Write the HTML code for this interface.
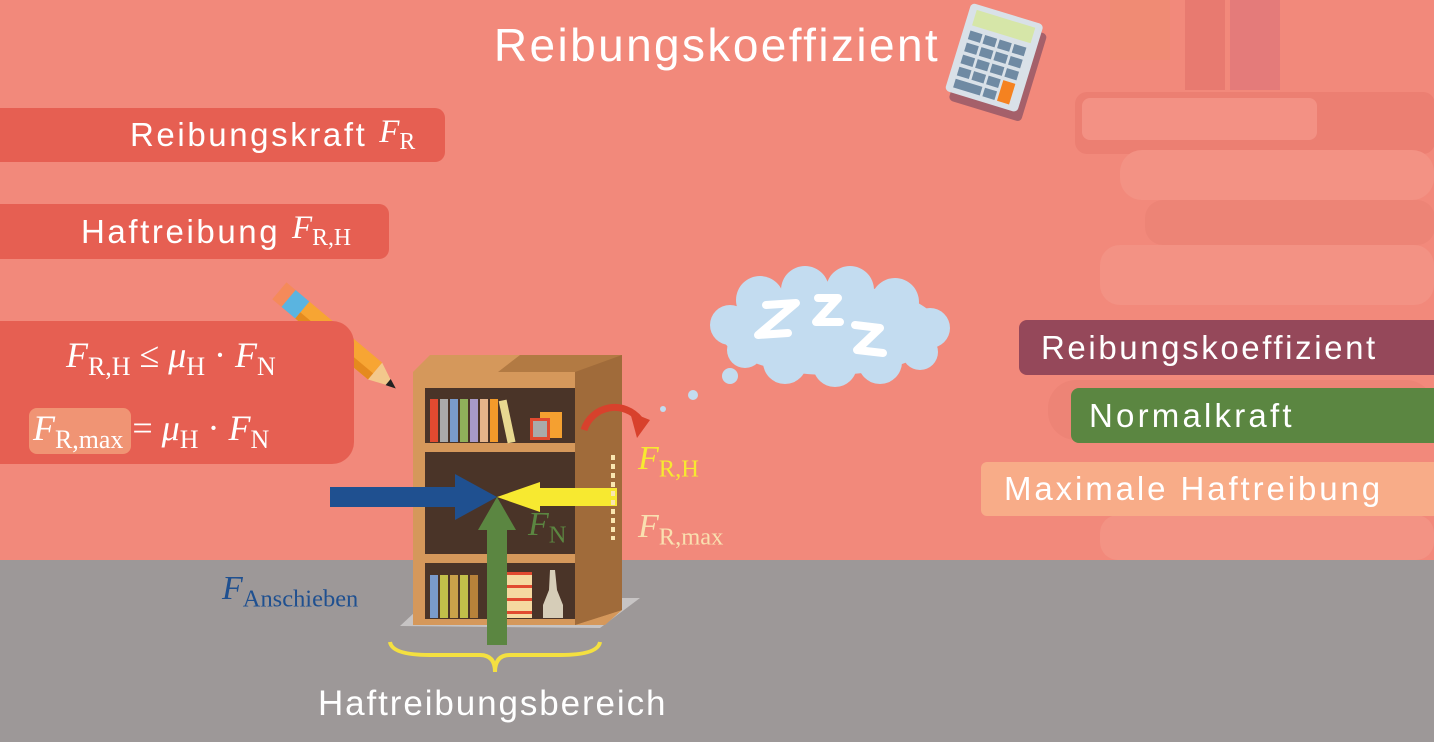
<!DOCTYPE html>
<html><head><meta charset="utf-8"><style>
body{margin:0;width:1434px;height:742px;overflow:hidden;background:#f2897b;font-family:"Liberation Sans",sans-serif;position:relative}
.a{position:absolute}
.box{position:absolute;color:#fff;font-size:33px;display:flex;align-items:center;box-sizing:border-box;letter-spacing:2.6px}
.m{font-family:"Liberation Serif",serif;font-style:italic;letter-spacing:0}
.s{font-family:"Liberation Serif",serif;font-style:normal;font-size:.72em;vertical-align:-0.3em}
</style></head><body>
<svg class="a" style="left:0;top:0" width="1434" height="742">
<g opacity="0.55">
<rect x="1075" y="92" width="360" height="62" rx="12" fill="#e8776c"/>
<rect x="1082" y="98" width="235" height="42" rx="8" fill="#f5998d"/>
<rect x="1120" y="150" width="314" height="50" rx="22" fill="#f49a8c"/>
<rect x="1145" y="200" width="290" height="45" rx="18" fill="#e98073"/>
<rect x="1100" y="245" width="334" height="60" rx="20" fill="#f49a8c"/>
<rect x="1048" y="380" width="386" height="60" rx="28" fill="#e98073"/>
<rect x="1100" y="515" width="334" height="45" rx="18" fill="#f49a8c"/>
<rect x="1185" y="0" width="40" height="90" fill="#e06f68"/>
<rect x="1230" y="0" width="50" height="90" fill="#d9707a"/>
<rect x="1110" y="0" width="60" height="60" fill="#ef8d70"/>
</g>
<rect x="0" y="560" width="1434" height="182" fill="#9d9898"/>
<g transform="translate(995,55) rotate(17) scale(0.9)">
<rect x="-40" y="-45" width="84" height="102" rx="5" fill="#a5606a" transform="translate(5,6)"/>
<rect x="-42" y="-48" width="84" height="102" rx="5" fill="#d9e1e8"/>
<rect x="-34" y="-42" width="68" height="18" fill="#d6e6a8"/>
<g fill="#6f8aa3"><rect x="-34" y="-18" width="14" height="10"/><rect x="-17" y="-18" width="14" height="10"/><rect x="0" y="-18" width="14" height="10"/><rect x="17" y="-18" width="14" height="10"/>
<rect x="-34" y="-4" width="14" height="10"/><rect x="-17" y="-4" width="14" height="10"/><rect x="0" y="-4" width="14" height="10"/><rect x="17" y="-4" width="14" height="10"/>
<rect x="-34" y="10" width="14" height="10"/><rect x="-17" y="10" width="14" height="10"/><rect x="0" y="10" width="14" height="10"/><rect x="17" y="10" width="14" height="10"/>
<rect x="-34" y="24" width="14" height="10"/><rect x="-17" y="24" width="14" height="10"/><rect x="0" y="24" width="14" height="10"/>
<rect x="-34" y="38" width="31" height="10"/><rect x="0" y="38" width="14" height="10"/></g>
<rect x="17" y="24" width="14" height="24" fill="#f58220"/>
</g>
<g transform="translate(280,290) rotate(40)">
<rect x="0" y="-10" width="22" height="22" fill="#f58a5a"/>
<rect x="12" y="-10" width="18" height="22" fill="#5ab4e0"/>
<rect x="30" y="-10" width="95" height="22" fill="#f7a533"/>
<rect x="30" y="4" width="95" height="8" fill="#e58a1e"/>
<polygon points="125,-10 150,1 125,12" fill="#f3c88c"/>
<polygon points="142,-3 152,1 142,5" fill="#222"/>
</g>
<g fill="#c3dcf0">
<ellipse cx="830" cy="330" rx="110" ry="45"/>
<circle cx="760" cy="300" r="24"/><circle cx="805" cy="290" r="24"/><circle cx="850" cy="290" r="24"/><circle cx="895" cy="302" r="24"/>
<circle cx="730" cy="325" r="20"/><circle cx="930" cy="328" r="20"/>
<circle cx="745" cy="350" r="18"/><circle cx="920" cy="352" r="18"/>
<circle cx="785" cy="362" r="22"/><circle cx="835" cy="365" r="22"/><circle cx="880" cy="362" r="22"/>
<circle cx="730" cy="376" r="8"/><circle cx="693" cy="395" r="5"/><circle cx="663" cy="409" r="3"/>
</g>
<g stroke="#fff" stroke-width="8" fill="none" stroke-linecap="round" stroke-linejoin="round">
<path d="M766 305 L796 303 L758 335 L788 333"/>
<path d="M818 298 L838 298 L816 322 L840 322"/>
<path d="M855 325 L880 328 L857 350 L883 353"/>
</g>
<polygon points="400,626 430,598 640,598 600,628" fill="#c7c4c4"/>
<polygon points="413,372 430,355 622,355 622,610 605,625 413,625" fill="#d5985b"/>
<polygon points="498,372 520,355 622,355 622,610 575,625 575,372" fill="#b27a43"/>
<polygon points="575,372 622,355 622,610 575,625" fill="#a06b3a"/>
<rect x="425" y="388" width="150" height="55" fill="#4a3428"/>
<rect x="425" y="452" width="150" height="102" fill="#4a3428"/>
<rect x="425" y="563" width="150" height="56" fill="#4a3428"/>
<g>
<rect x="430" y="399" width="8" height="43" fill="#e14a30"/><rect x="440" y="399" width="8" height="43" fill="#aaa"/><rect x="450" y="399" width="8" height="43" fill="#7a9bcc"/><rect x="460" y="399" width="8" height="43" fill="#8fb05a"/><rect x="470" y="399" width="8" height="43" fill="#a79ac8"/><rect x="480" y="399" width="8" height="43" fill="#e5b48a"/><rect x="490" y="399" width="8" height="43" fill="#f39a2a"/>
<rect x="503" y="400" width="8" height="43" fill="#e8d890" transform="rotate(-12 507 421)"/>
<rect x="540" y="412" width="22" height="26" fill="#f5a030"/><rect x="530" y="418" width="20" height="22" fill="#e14a30"/><rect x="533" y="421" width="14" height="16" fill="#aaa"/>
<rect x="430" y="575" width="8" height="43" fill="#7a9bcc"/><rect x="440" y="575" width="8" height="43" fill="#c2c04a"/><rect x="450" y="575" width="8" height="43" fill="#c9a24a"/><rect x="460" y="575" width="8" height="43" fill="#c2c04a"/><rect x="470" y="575" width="8" height="43" fill="#b8823a"/>
<rect x="488" y="572" width="44" height="46" fill="#f5d9a0"/><g fill="#e14a30"><rect x="488" y="572" width="44" height="3"/><rect x="488" y="585" width="44" height="3"/><rect x="488" y="598" width="44" height="3"/><rect x="488" y="611" width="44" height="3"/></g>
<path d="M550 570 L555 570 L557 590 L563 605 L563 618 L543 618 L543 605 L549 590Z" fill="#d6cdb8"/>
</g>
<polygon points="330,487 455,487 455,474 497,497 455,520 455,507 330,507" fill="#1f5090"/>
<polygon points="617,488 540,488 540,482 497,497 540,512 540,506 617,506" fill="#f7e930"/>
<polygon points="487,645 487,530 478,530 497,497 516,530 507,530 507,645" fill="#5b8641"/>
<path d="M584 430 A32 32 0 0 1 640 420" stroke="#d8412c" stroke-width="7" fill="none"/>
<polygon points="630,412 650,420 637,438" fill="#d8412c"/>
<line x1="613" y1="455" x2="613" y2="540" stroke="#f9e6b0" stroke-width="4" stroke-dasharray="5,4"/>
<path d="M390 642 Q392 655 430 655 L480 655 Q495 655 495 672 Q495 655 510 655 L560 655 Q598 655 600 642" stroke="#f4e040" stroke-width="4" fill="none"/>
</svg>
<div class="a" style="left:0;width:1434px;top:18px;text-align:center;font-size:46px;color:#fff;letter-spacing:2.4px">Reibungskoeffizient</div>
<div class="box" style="left:0;top:108px;width:445px;height:54px;background:#e65f52;border-radius:0 10px 10px 0;padding-left:130px">Reibungskraft&nbsp;<span class="m">F<span class="s">R</span></span></div>
<div class="box" style="left:0;top:204px;width:389px;height:55px;background:#e65f52;border-radius:0 10px 10px 0;padding-left:81px">Haftreibung&nbsp;<span class="m">F<span class="s">R,H</span></span></div>
<div class="a" style="left:0;top:321px;width:354px;height:143px;background:#e65f52;border-radius:0 22px 22px 0"></div>
<div class="a m" style="left:66px;top:334px;font-size:36px;color:#fff">F<span class="s">R,H</span> <span style="font-style:normal">≤</span> μ<span class="s">H</span> <span style="font-style:normal">·</span> F<span class="s">N</span></div>
<div class="a" style="left:29px;top:408px;width:102px;height:46px;background:#f09474;border-radius:8px"></div>
<div class="a m" style="left:33px;top:407px;font-size:36px;color:#fff">F<span class="s">R,max</span> <span style="font-style:normal">=</span> μ<span class="s">H</span> <span style="font-style:normal">·</span> F<span class="s">N</span></div>
<div class="box" style="left:1019px;top:320px;width:415px;height:55px;background:#95485a;border-radius:8px 0 0 8px;padding-left:22px">Reibungskoeffizient</div>
<div class="box" style="left:1071px;top:388px;width:363px;height:55px;background:#5b8641;border-radius:8px 0 0 8px;padding-left:18px;letter-spacing:3.2px">Normalkraft</div>
<div class="box" style="left:981px;top:462px;width:453px;height:54px;background:#f8ac88;border-radius:6px 0 0 6px;padding-left:23px;letter-spacing:2.9px">Maximale Haftreibung</div>
<div class="a m" style="left:638px;top:440px;font-size:34px;color:#f7e930">F<span class="s">R,H</span></div>
<div class="a m" style="left:638px;top:508px;font-size:34px;color:#f9e0b0">F<span class="s">R,max</span></div>
<div class="a m" style="left:528px;top:506px;font-size:34px;color:#5b8641">F<span class="s">N</span></div>
<div class="a m" style="left:222px;top:570px;font-size:34px;color:#1f5090">F<span class="s">Anschieben</span></div>
<div class="a" style="left:318px;top:684px;font-size:35px;color:#fff;letter-spacing:1.9px">Haftreibungsbereich</div>
</body></html>
